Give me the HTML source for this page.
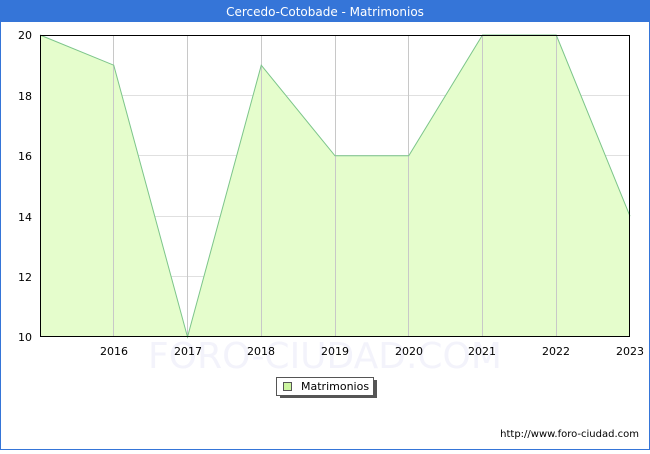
<!DOCTYPE html>
<html><head><style>
body{margin:0;width:650px;height:450px;overflow:hidden;background:#fff;font-family:"DejaVu Sans","Liberation Sans",sans-serif;}
</style></head><body>
<svg width="650" height="450" xmlns="http://www.w3.org/2000/svg" font-family="DejaVu Sans, Liberation Sans, sans-serif">
<rect x="0.5" y="0.5" width="649" height="449" fill="#fff" stroke="#3575d8"/>
<rect x="0" y="0" width="650" height="22" fill="#3575d8"/>
<text x="325" y="16" font-size="12" fill="#fff" text-anchor="middle">Cercedo-Cotobade - Matrimonios</text>
<text x="325" y="368" font-size="36" fill="#f3f3fb" text-anchor="middle">FORO-CIUDAD.COM</text>
<g stroke="#e0e0e0" stroke-width="1">
<line x1="40" y1="95.5" x2="630" y2="95.5"/><line x1="40" y1="155.5" x2="630" y2="155.5"/>
<line x1="40" y1="216.5" x2="630" y2="216.5"/><line x1="40" y1="276.5" x2="630" y2="276.5"/>
</g>
<polygon points="40,35 113.75,65.2 187.5,337 261.25,65.2 335,155.8 408.75,155.8 482.5,35 556.25,35 630,216.2 630,337 40,337" fill="#e5fdcc"/>
<g stroke="#c8c8c8" stroke-width="1">
<line x1="113.5" y1="35" x2="113.5" y2="337"/><line x1="187.5" y1="35" x2="187.5" y2="337"/>
<line x1="261.5" y1="35" x2="261.5" y2="337"/><line x1="335.5" y1="35" x2="335.5" y2="337"/>
<line x1="408.5" y1="35" x2="408.5" y2="337"/><line x1="482.5" y1="35" x2="482.5" y2="337"/>
<line x1="556.5" y1="35" x2="556.5" y2="337"/>
</g>
<polyline points="40,35 113.75,65.2 187.5,337 261.25,65.2 335,155.8 408.75,155.8 482.5,35 556.25,35 630,216.2" fill="none" stroke="#7cc58a" stroke-width="1"/>
<rect x="40.5" y="35.5" width="589" height="301" fill="none" stroke="#000"/>
<g font-size="11" fill="#000">
<g text-anchor="end"><text x="32" y="39">20</text><text x="32" y="100">18</text><text x="32" y="160">16</text><text x="32" y="221">14</text><text x="32" y="281">12</text><text x="32" y="341">10</text></g>
<g text-anchor="middle"><text x="114" y="355">2016</text><text x="188" y="355">2017</text><text x="261" y="355">2018</text><text x="335" y="355">2019</text><text x="409" y="355">2020</text><text x="482" y="355">2021</text><text x="556" y="355">2022</text><text x="630" y="355">2023</text></g>
</g>
<rect x="280" y="380" width="97" height="18" fill="#555"/>
<rect x="276.5" y="377.5" width="97" height="18" fill="#fff" stroke="#555"/>
<rect x="283.5" y="382.5" width="8" height="8" fill="#ccf5a0" stroke="#555"/>
<text x="301" y="390" font-size="11">Matrimonios</text>
<text x="639" y="437" font-size="10" text-anchor="end">http://www.foro-ciudad.com</text>
</svg>
</body></html>
